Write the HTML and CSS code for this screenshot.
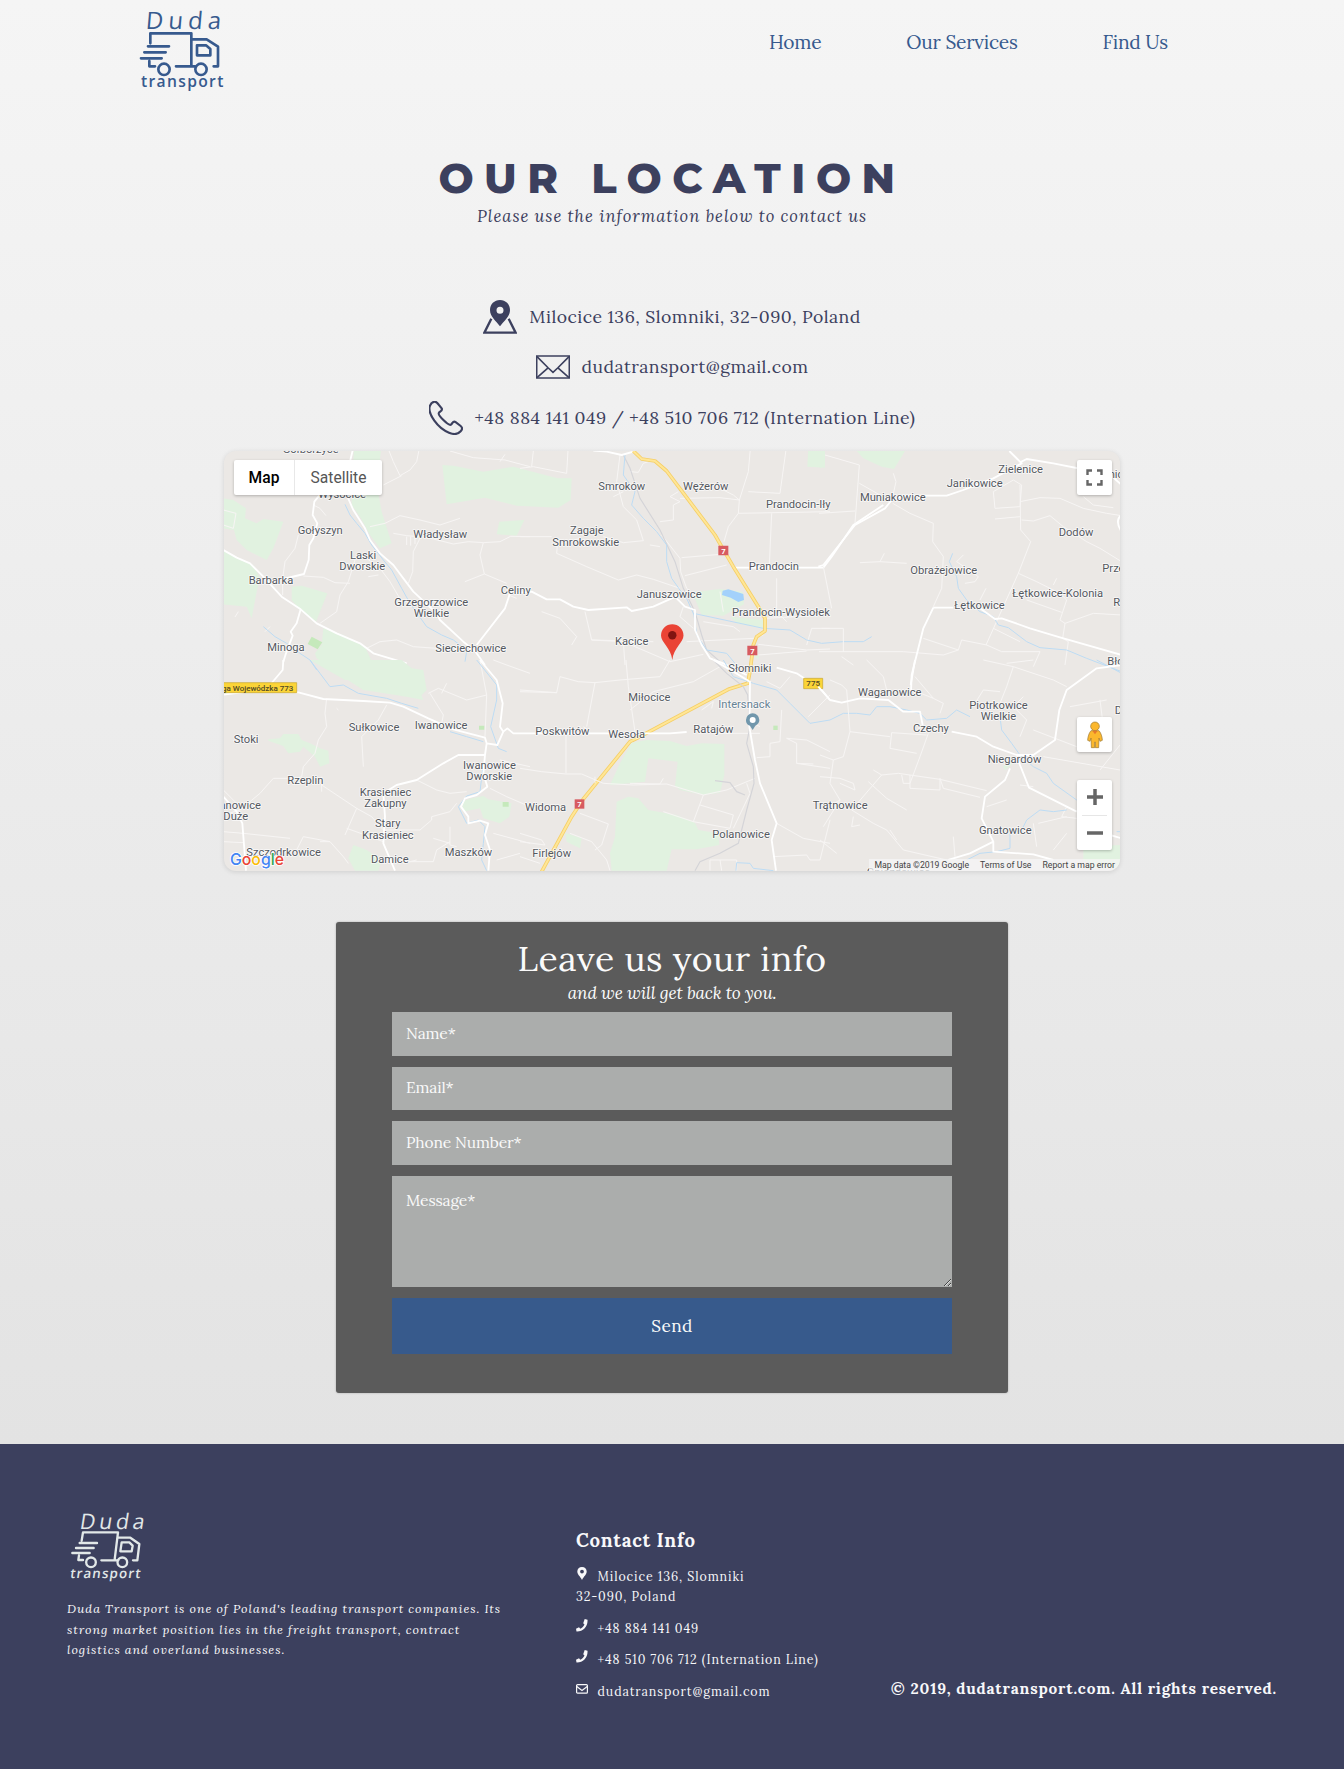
FILE: index.html
```html
<!DOCTYPE html>
<html lang="en">
<head>
<meta charset="utf-8">
<title>Duda Transport - Find Us</title>
<link rel="stylesheet" href="styles.css">
</head>
<body>
<div class="page">
<header class="header">
  <svg class="logo" viewBox="0 0 390 300" role="img" aria-label="Duda transport">
    <g class="logo-text">
      <text transform="translate(76 86) skewX(-5)" font-size="72" textLength="226">Duda</text>
      <text x="63" y="260" font-size="47" font-weight="600" textLength="247">transport</text>
    </g>
    <g class="logo-lines">
      <path d="M91 130V100H214V196M168 199H225M214 118H260L294 140V199H281M88 183V199H105M84 139H147M73 157H137M63 175H125"/>
      <path d="M231 136H258L271 147V166H231Z"/>
      <circle cx="132" cy="208" r="17"/><circle cx="243" cy="208" r="17"/>
    </g>
  </svg>
  <nav class="nav">
    <a>Home</a><a>Our Services</a><a>Find Us</a>
  </nav>
</header>

<main>
  <h1 class="title">OUR LOCATION</h1>
  <p class="subtitle">Please use the information below to contact us</p>

  <ul class="contacts">
    <li class="contact">
      <svg viewBox="0 0 102 102"><path d="M25 56L4 98H98L77 56" fill="none" stroke="currentColor" stroke-width="7"/><path fill-rule="evenodd" d="M51 0C34 0 21 13 21 30C21 50 40 64 51 79C62 64 81 50 81 30C81 13 68 0 51 0ZM51 20A10.500 10.500 0 1 1 51 41A10.500 10.500 0 1 1 51 20Z" fill="currentColor"/></svg>
      <span>Milocice 136, Slomniki, 32-090, Poland</span>
    </li>
    <li class="contact">
      <svg viewBox="0 0 102 102"><g fill="none" stroke="currentColor" stroke-width="5"><path d="M2 18H100V84H2Z"/><path d="M3 20L37 54L51 67L65 54L99 20M3 83L37 53M99 83L65 53"/></g></svg>
      <span>dudatransport@gmail.com</span>
    </li>
    <li class="contact">
      <svg viewBox="0 0 102 102"><path d="M16 2C22 1 25 5 29 11L38 22C42 28 34 31 30 35C26 39 37 51 44 58C51 65 61 74 66 71C70 67 73 59 79 63L95 75C101 80 100 86 95 91C86 101 74 101 60 95C45 89 28 76 16 59C6 45-2 26 3 14C6 7 11 3 16 2Z" fill="none" stroke="currentColor" stroke-width="6.500"/></svg>
      <span>+48 884 141 049 / +48 510 706 712 (Internation Line)</span>
    </li>
  </ul>

  <section class="map">
    <svg class="map-canvas" viewBox="0 0 896 420">
      <!-- north-west tile -->
      <g transform="translate(-4 -6) scale(.33333)">
        <g class="green">
          <path d="M10 160L40 165L78 190L75 220L110 235L130 222L190 230L160 310L140 345L80 315L50 285L42 255L10 250Z"/>
          <path d="M10 318L60 345L100 360L120 400L110 440L95 520L80 485L10 478Z"/>
          <path d="M215 425L245 422L322 445L288 530L240 495L215 465Z"/>
          <path d="M402 0H485L470 120L485 200L515 295L480 310L450 270L420 215L395 180Z"/>
          <path d="M667 60L700 62L790 80L880 65L1013 100L1055 100L1052 165L1015 188L890 182L795 158L680 178Z"/>
          <path d="M838 230L913 225L890 272L830 268Z"/>
          <path d="M310 550L370 570L435 605L460 660L500 700L540 690L600 740L610 765L560 755L430 735L375 700L290 640L285 625L305 600Z"/>
          <path class="park" d="M275 575L307 592L293 613L263 597Z"/>
        </g>
        <g class="minor">
          <path d="M235 270L225 310L195 350L188 400V450M250 393L310 397L345 413L390 415M405 345L385 410L360 450L350 500L300 535M450 245L495 235L540 212L600 225L660 240L720 220M520 265L560 272L600 275L640 282L700 297L745 290L790 293L840 290L872 274L930 275M790 293L780 330L793 387L860 415M600 280L580 320L578 380L565 415M500 0L520 50L540 92L570 75L590 50L600 0M545 92L490 120M690 18L760 38L855 45L930 65M793 387L735 410M440 610L480 590L530 585L580 605L650 610M280 180L300 190L318 212M440 340L480 370L510 410L545 470M855 28L840 50M10 195L48 205L40 250L10 240M865 450L890 460"/>
          <path d="M560 275V300M572 275V302M585 275V297M475 390L445 395M55 500L45 516M135 560L150 545"/>
        </g>
        <g class="river"><path d="M375 178L390 210L410 235L435 265L455 300L490 345L515 375L545 430L570 475L620 545L665 570L700 585L720 600L740 620L735 650"/><path d="M130 545L165 575L200 595L240 625L270 645L290 675"/></g>
        <g class="major">
          <path d="M10 315L50 338L90 355L130 395L185 455L242 493L290 535L350 565L420 595L460 625L560 655"/>
          <path d="M242 493L230 535L212 560L218 572L198 625L190 650"/>
          <path d="M315 130L283 170L278 210L292 235L280 280L268 300L266 345L252 387L190 402"/>
          <path d="M402 0L385 70L380 150L400 195L435 250L450 285L480 325L520 360L550 400L580 440L650 505L660 525L730 590L765 618L795 660"/>
          <path d="M770 600L855 490L870 445L935 440L980 463L1020 463L1060 485L1105 495L1220 487L1235 498L1300 485L1400 440"/>
        </g>
        <g class="label">
          <text x="188" y="24">Gołborzyce</text><text x="295" y="158">Wysocice</text><text x="233" y="266">Gołyszyn</text><text x="580" y="280">Władysław</text><text x="390" y="341">Laski</text><text x="358" y="374">Dworskie</text><text x="86" y="416">Barbarka</text><text x="842" y="446">Celiny</text><text x="523" y="483">Grzegorzowice</text><text x="581" y="517">Wielkie</text><text x="646" y="622">Sieciechowice</text><text x="142" y="619">Minoga</text>
        </g>
      </g>
      <!-- north-centre tile -->
      <g transform="translate(296 -6) scale(.33333)">
        <g class="green"><path d="M530 440L600 432L668 440L672 478L610 512L545 510L520 450Z"/><path d="M630 515L735 525V552L650 535Z"/><path d="M865 10H915V68L862 65Z"/><path d="M700 635L718 630L715 642Z"/></g>
        <path class="lake" d="M608 437L625 433L670 447L672 465L655 471L632 458L606 450Z"/>
        <g class="minor"><path d="M145 0L140 85L40 65L0 70M40 18L35 65M300 30L290 110L310 185L350 225L370 287L310 293L250 275M0 275H95M110 325L112 300L180 280M110 325L200 365L295 405L350 390L400 403L480 430M330 80L355 82L370 55L400 45M420 230L460 225V180L480 170L450 155L475 140M480 160L600 158L658 165L640 150L590 125M692 0L685 80L658 165L655 205L625 245L612 290M655 205L930 200M755 205L748 360M685 140L780 145L800 0M485 338L600 328M495 392L620 360M425 270L480 340L482 380L500 430L520 450M420 305L390 300M65 500L120 520L170 575L155 600M195 500L215 585L310 590L315 660M215 585L400 590M310 590L450 650L550 628M490 485L480 515L520 550M550 530L640 545L660 560M600 440L610 500M735 520L920 510M770 400V500L800 530M860 600L875 550H930M715 598L860 615L930 612M715 630L860 618M280 155L310 140M500 590L600 585L700 580L730 570"/></g>
        <path class="rail" d="M310 30L330 70L360 160L420 255L465 350L490 430L525 500L545 570L560 615L600 650"/>
        <g class="river"><path d="M315 30L310 90L345 140L335 180L370 220L410 260L440 300L440 350L455 400L480 435L500 460L522 510L530 570L560 615L620 625L645 655"/><path d="M520 505L730 550L810 555L860 585L905 595L970 590L1030 590L1055 575"/></g>
        <g class="major"><path d="M220 17L260 20L305 30L340 20M470 460L495 485L525 495L525 555L545 600L570 640L610 655L680 690M640 368H910L935 335L1000 240L1090 180M950 152"/></g>
        <path class="highway-edge" d="M340 18L365 42L405 48L440 78L585 270L605 305L640 365L715 485L735 520V558L710 575L700 600L690 680L683 715L625 733L350 880L330 890L190 1062L155 1115L65 1280"/>
        <path class="highway" d="M340 18L365 42L405 48L440 78L585 270L605 305L640 365L715 485L735 520V558L710 575L700 600L690 680L683 715L625 733L350 880L330 890L190 1062L155 1115L65 1280"/>
        <g class="label"><text x="235" y="134">Smroków</text><text x="489" y="135">Wężerów</text><text x="738" y="189">Prandocin-Iły</text><text x="150" y="268">Zagaje</text><text x="97" y="302">Smrokowskie</text><text x="686" y="374">Prandocin</text><text x="350" y="458">Januszowice</text><text x="636" y="514">Prandocin-Wysiołek</text><text x="285" y="600">Kacice</text></g>
        <g class="shield"><path d="M595 302H625V331H595ZM682 602H712V631H682Z"/><text x="610" y="326">7</text><text x="697" y="626">7</text></g>
      </g>
      <!-- north-east tile -->
      <g transform="translate(596 -6) scale(.33333)">
        <g class="green"><path d="M110 18H255L222 72L185 65L130 40Z"/><path d="M-3 18H15V60L0 70Z"/></g>
        <g class="minor"><path d="M15 30L118 60L105 235M118 115L180 150M220 85L228 110L218 155M218 175L270 205L340 235L338 290L370 335L365 430L340 485M-3 205L105 198M120 353L180 350L260 355M180 350L193 325M410 350L430 330M410 350L475 395L465 410L435 415M480 465L498 430M525 190L600 185L605 120L580 105L520 140L525 190M525 222L600 215M600 120L602 255L632 290L595 385L498 600M600 170L660 158L720 160L790 190L860 205L905 212M605 225L640 228L690 212L730 245L800 290L840 310L905 350M595 385L650 410L720 445L740 465L720 525L735 535L820 505L905 510M620 465L725 502M700 420L710 400M735 535L728 580L745 590L735 660M790 155L820 180L880 188M10 365L35 490M310 580L415 615L425 585L500 600L545 620L660 620L640 665M-3 620L250 620L370 630L415 615M5 550H70V620M65 635L100 660M520 550L600 590"/></g>
        <g class="river"><path d="M398 325L388 350L410 395L415 430L440 465L480 500L520 515L535 540L565 548L620 590L660 608L740 615L800 640L905 680"/></g>
        <g class="major"><path d="M-5 365L10 360L105 240L195 190L215 165L250 152H380L430 135L520 100L605 55L568 18M600 52L620 42L700 55L800 75L860 80L905 120M340 488H400M480 490L525 522L545 520L630 550L720 577L905 630M340 488L310 550L275 690L273 740M905 210C890 220 890 240 905 260"/></g>
        <g class="label"><text x="535" y="83">Zielenice</text><text x="380" y="125">Janikowice</text><text x="120" y="169">Muniakowice</text><text x="866" y="98">nice</text><text x="716" y="274">Dodów</text><text x="271" y="386">Obrażejowice</text><text x="847" y="381">Przemęczany</text><text x="577" y="456">Łętkowice-Kolonia</text><text x="403" y="493">Łętkowice</text><text x="880" y="483">Radziemice</text><text x="862" y="659">Błogocice</text></g>
      </g>
      <!-- south-west tile -->
      <g transform="translate(-4 209) scale(.33333)">
        <g class="green"><path d="M270 0H545L575 25L610 30L620 90L600 110L550 90L500 75L455 60H375Z"/><path d="M145 238L180 235L190 222L235 222L245 240L270 250L300 265L325 272L328 310L300 320L285 290L250 260L240 275L205 280L190 258L145 242Z"/><path d="M725 425L755 415L790 408L805 418L875 430L868 470L840 490L790 475L780 445L730 455Z"/><path d="M400 555L440 570L485 600L475 632H405L385 595Z"/><path class="park" d="M777 197H793V209H777ZM848 426H866V440H848Z"/></g>
        <g class="minor"><path d="M320 115L315 160L320 200L295 240L285 280L250 320L245 350L230 355H160L120 400L60 450L10 465M305 350V395M305 375L410 445L455 470L490 510M410 445L375 525M500 135L475 180L425 230L430 320M630 100L670 165L665 190M625 100L655 85L740 120L800 105M780 0L800 105L795 230M590 360L650 390L690 400L740 395M490 510H600L635 480L635 470L690 455L710 430M380 505L450 530L490 545M250 530L330 545L370 590L385 610M250 530L230 570M300 545H330M10 515L70 520L210 535M10 545L70 548M530 605L640 605L650 570L690 545M690 500V555L710 560M690 550L640 535M810 385L840 400L860 410L930 440M350 145L355 150M550 610L590 600M830 600L900 580M820 520L930 550M680 70L665 100M840 300L930 320M820 0L860 15L930 40M10 390L50 430"/></g>
        <g class="river"><path d="M270 0L300 40L330 80L370 75L415 100L500 115L545 130L595 145M690 215L740 230L790 245"/><path d="M770 0L830 75L830 120L812 200L835 265L860 275M790 310L780 395L740 408L715 440L740 490L775 480L795 500L790 550L785 600L800 632"/></g>
        <g class="major"><path d="M190 0L188 30L150 75L130 88M0 105L120 90L235 97L310 117L430 123L510 128L550 140L625 175L700 208L795 233L800 250L832 255L850 215L862 205L880 220H1350L1400 216M780 0L830 60L848 130L840 200L850 215M800 250L795 285H715L670 310L590 360L530 375L490 400L495 470L490 550L525 632M795 285L790 340L802 380L770 405L735 415L723 440L745 470L745 490L780 482L805 490L795 525L810 570L805 632M10 410L50 455L67 490L78 632"/></g>
        <path d="M0 68H230V98H0Z" fill="#fbd437" stroke="#c6a52a" stroke-width="2"/><text class="road-no" x="6" y="92" textLength="214">ga Wojewódzka 773</text>
        <g class="label"><text x="386" y="212">Sułkowice</text><text x="584" y="207">Iwanowice</text><text x="41" y="248">Stoki</text><text x="202" y="372">Rzeplin</text><text x="729" y="327">Iwanowice</text><text x="739" y="361">Dworskie</text><text x="419" y="408">Krasieniec</text><text x="433" y="441">Zakupny</text><text x="-20" y="446">Janowice</text><text x="10" y="479">Duże</text><text x="465" y="502">Stary</text><text x="426" y="536">Krasieniec</text><text x="79" y="587">Szczodrkowice</text><text x="453" y="609">Damice</text><text x="674" y="587">Maszków</text></g>
      </g>
      <!-- south-centre tile -->
      <g transform="translate(296 209) scale(.33333)">
        <g class="green"><path d="M335 248L380 240L450 243L500 258L545 250L613 252V345L600 398L550 405L480 390L465 378L473 305L385 295L375 365L270 375L300 310Z"/><path d="M290 425L325 410L355 415L385 450L470 465L525 488L535 510L595 520L598 555L530 568H455L440 632H275L270 580L285 530Z"/><path d="M135 518L185 535L180 565L140 545Z"/><path class="park" d="M760 197H773V210H760Z"/></g>
        <g class="minor"><path d="M0 95L110 98L120 50L175 65L225 68L300 60L420 50L450 0M225 68L200 200M110 98L0 90M318 0L325 80L345 215M330 150L400 95L520 65L600 20M138 220V340M0 325L65 335L138 342H185L250 370L340 375L440 372L550 405L620 390L705 355M550 405L520 485L430 455M540 435L640 465L630 505L520 485M680 370L690 400L640 505M180 460L265 492L245 555L225 570M150 520L215 545L260 600L270 632M680 180L720 200M785 150L780 245L750 250V290L710 293M800 235L830 250V310L930 325M830 310L880 312M800 235L860 240L930 275M0 520L65 540L75 555L0 545M770 490L850 535L930 550M930 480L900 600L870 600L860 585L760 590M570 632V600H650V632M600 600L605 632M330 370L420 372L430 355M225 350V370M575 145L580 125L545 150M0 590L60 610M580 220H720M740 65L780 85L810 50M865 170L930 105M205 210L190 200"/></g>
        <path class="rail" d="M580 0L620 40L670 80L683 105L690 200L680 250L700 320L702 370L680 450L655 550L600 580L540 605L525 632M585 362L630 368L650 395L675 405"/>
        <g class="river"><path d="M610 0L640 50L700 70L770 90L810 130L840 160L870 190L930 180L970 160L1010 160L1050 165L1070 140L1110 140L1160 150L1200 160L1220 180L1280 175L1310 150L1350 170"/><path d="M648 632L650 608L690 610L700 625L760 632"/></g>
        <g class="major"><path d="M580 0L640 35L690 65L688 200L705 300L720 370L770 490L755 540L768 632M770 23L830 40L905 90L930 120"/></g>
        <g class="label"><text x="625" y="35">Słomniki</text><text x="325" y="122">Miłocice</text><text x="46" y="226">Poskwitów</text><text x="265" y="234">Wesoła</text><text x="520" y="219">Ratajów</text><text x="15" y="453">Widoma</text><text x="577" y="534">Polanowice</text><text x="37" y="591">Firlejów</text><text class="place" x="595" y="143">Intersnack</text></g>
        <path d="M698 210L690 197C680 194 678 187 678 180A20 20 0 1 1 718 180C718 187 714 193 706 197Z" fill="#7197ac"/><circle cx="698" cy="180" r="9" fill="#fff"/>
        <g class="shield"><path d="M164 418H193V446H164Z"/><text x="178" y="442">7</text></g>
        <path d="M851 55H908V86H851Z" fill="#fbd437" stroke="#c6a52a" stroke-width="2"/><text class="road-no" x="859" y="79" textLength="41">775</text>
      </g>
      <!-- south-east tile -->
      <g transform="translate(596 209) scale(.33333)">
        <g class="green"><path d="M790 560L905 555V625H820L790 600Z"/><path d="M548 318L580 310L555 330Z"/></g>
        <g class="minor"><path d="M140 0L190 50L200 90M285 50L340 115L370 130L360 160M90 215L210 230M290 95L340 115M325 220L300 290L270 370M215 218L320 225M215 218L210 265L290 280M0 285L40 300L70 290L90 215L80 90L65 75L30 60M40 300L30 370L60 420L25 440M95 450L185 345L235 340L360 358L500 392M185 345L160 330M0 350L60 355L100 370L105 390L60 370M145 365L200 415L260 450M245 345L250 370H270M270 345V385L360 390V355L370 385L480 412M95 450L160 490L200 510L250 570L380 600M100 470L95 500L120 495M400 530L405 590M0 540L50 580M210 510L230 540M10 500L60 420M490 0L580 20L560 80L540 130M465 130L490 90L540 95M580 20L700 60L740 80M610 110L580 140L620 180L600 230M750 140L860 120M640 210L770 260M670 290L900 330M900 255L840 330M600 375L640 380M500 440L560 420M740 440L725 470L770 475M655 490L740 470M700 570L740 520M560 10L640 0M840 120L850 200M640 490L650 560"/></g>
        <g class="river"><path d="M830 0L905 40M540 170L545 210L575 250L600 285L640 320L680 340L700 370L770 420M740 450L700 455L660 450L620 480L605 510L570 520V565L530 575L480 580L440 600M890 515H905"/></g>
        <g class="major"><path d="M-5 80L30 120L65 128L120 115L205 120L250 155L300 155L308 195M285 0L272 75M395 215L470 230L520 260L590 285L640 285L705 240L718 150L740 90L830 25L905 15M590 290L627 383L770 455M570 325L555 360L495 410L485 475L520 545V575L640 583L700 600M520 545L450 580L385 600M870 525L905 535"/></g>
        <g class="label"><text x="114" y="108">Waganowice</text><text x="448" y="147">Piotrkowice</text><text x="482" y="181">Wielkie</text><text x="279" y="217">Czechy</text><text x="884" y="161">Dębina</text><text x="503" y="309">Niegardów</text><text x="-22" y="448">Trątnowice</text><text x="477" y="522">Gnatowice</text><text x="140" y="648">Gniazdowice</text></g>
      </g>
      <path d="M448.300 209C447 197 437 191 437 184.500A11.200 11.200 0 1 1 459.500 184.500C459.500 191 449.600 197 448.300 209Z" fill="#ea4335"/><circle cx="448.300" cy="184.300" r="4.200" fill="#811411"/>
      <text class="google" x="6" y="414" textLength="54" lengthAdjust="spacingAndGlyphs"><tspan fill="#4285f4">G</tspan><tspan fill="#ea4335">o</tspan><tspan fill="#fbbc05">o</tspan><tspan fill="#4285f4">g</tspan><tspan fill="#34a853">l</tspan><tspan fill="#ea4335">e</tspan></text>
    </svg>
    <div class="map-types"><button class="type-map">Map</button><button class="type-satellite">Satellite</button></div>
    <button class="map-button fullscreen" aria-label="Full screen"><svg width="17" height="17" viewBox="0 0 17 17"><path d="M1.500 6V1.500H6M11 1.500H15.500V6M15.500 11V15.500H11M6 15.500H1.500V11" fill="none" stroke="#666" stroke-width="2.400"/></svg></button>
    <button class="map-button pegman" aria-label="Street view"><svg width="16" height="28" viewBox="0 0 48 82"><g fill="#fbb72d" stroke="#9b762e" stroke-width="2"><path d="M12 28H36C42 34 46 48 46 57L39 60L36 50L35 79H25V62H23V79H13L12 50L9 60L2 57C2 48 6 34 12 28Z"/><circle cx="24" cy="15" r="13"/></g><path d="M16 28H32L24 39Z" fill="#e5782c"/></svg></button>
    <div class="zoom"><button aria-label="Zoom in"><svg width="16" height="16"><path d="M8 0V16M0 8H16" stroke="#666" stroke-width="3.500"/></svg></button><button aria-label="Zoom out"><svg width="16" height="16"><path d="M0 8H16" stroke="#666" stroke-width="3.500"/></svg></button></div>
    <div class="attribution"><span>Map data ©2019 Google</span><span>Terms of Use</span><span>Report a map error</span></div>
  </section>

  <form class="form">
    <h2>Leave us your info</h2>
    <p>and we will get back to you.</p>
    <div class="fields">
      <input class="field" placeholder="Name*">
      <input class="field" placeholder="Email*">
      <input class="field" placeholder="Phone Number*">
      <textarea class="field message" placeholder="Message*"></textarea>
      <button class="send" type="button">Send</button>
    </div>
  </form>
</main>

<footer class="footer">
  <div class="about">
    <svg class="footer-logo" viewBox="50 50 240 230" role="img" aria-label="Duda transport">
      <g class="logo-text">
        <text transform="translate(86 115) skewX(-9)" font-size="64" textLength="194">Duda</text>
        <text transform="translate(58 263) skewX(-8)" font-size="40" font-weight="600" textLength="211">transport</text>
      </g>
      <g class="logo-lines">
        <path d="M94 151L98 126H203L193 208M153 210H204M202 142H240L267 161L261 210H248M86 195L84 209H98M88 158H140M77 173H130M66 188H118"/>
        <path d="M214 156H237L247 166L244 183H210Z"/>
        <circle cx="122" cy="216" r="14.500"/><circle cx="216" cy="216" r="14.500"/>
      </g>
    </svg>
    <p>Duda Transport is one of Poland's leading transport companies. Its<br>strong market position lies in the freight transport, contract<br>logistics and overland businesses.</p>
  </div>
  <div class="info">
    <h3>Contact Info</h3>
    <p><svg viewBox="0 0 12 13"><path fill-rule="evenodd" d="M6 0C3.200 0 1.300 2 1.300 4.500C1.300 7.500 4 9 6 13C8 9 10.700 7.500 10.700 4.500C10.700 2 8.800 0 6 0ZM6 2.700A1.900 1.900 0 1 1 6 6.500A1.900 1.900 0 1 1 6 2.700Z" fill="currentColor"/></svg>Milocice 136, Slomniki<br>32-090, Poland</p>
    <p><svg viewBox="0 0 12 13"><path d="M8.700 0L11.500 .7C12.100 7.500 7 12.800 .5 12.500L0 9.700L3 8.300L4.300 9.800C6.200 9 7.700 7.500 8.500 5.600L7.200 4.200Z" fill="currentColor"/></svg>+48 884 141 049</p>
    <p><svg viewBox="0 0 12 13"><path d="M8.700 0L11.500 .7C12.100 7.500 7 12.800 .5 12.500L0 9.700L3 8.300L4.300 9.800C6.200 9 7.700 7.500 8.500 5.600L7.200 4.200Z" fill="currentColor"/></svg>+48 510 706 712 (Internation Line)</p>
    <p><svg viewBox="0 0 12 13"><g fill="none" stroke="currentColor" stroke-width="1.200"><rect x=".6" y="2.600" width="10.800" height="8.600" rx="1"/><path d="M.8 4.500L6 8.500L11.200 4.500"/></g></svg>dudatransport@gmail.com</p>
  </div>
  <p class="copyright">© 2019, dudatransport.com. All rights reserved.</p>
</footer>
</div>
</body>
</html>
```
FILE: styles.css
```css
* { box-sizing: border-box; margin: 0; padding: 0; }
body { font-family: Lora, "Liberation Serif", serif; color: #3c405e; background: #3c405e; }
button, input, textarea { font: inherit; border: 0; }
.page { background: linear-gradient(#f5f5f5, #e3e3e3 1444px); }

.header { height: 100px; padding: 0 176px 0 120px; display: flex; justify-content: space-between; align-items: flex-start; color: #375a8e; }
.logo { width: 130px; height: 100px; }
.logo-text { font-family: "Open Sans", sans-serif; fill: currentColor; }
.logo-lines { fill: none; stroke: currentColor; stroke-width: 8; stroke-linecap: round; stroke-linejoin: round; }
.nav { display: flex; gap: 85px; font-size: 19.200px; line-height: 85px; letter-spacing: -.25px; }

.title { margin-top: 53px; text-align: center; font: 800 41.600px/50px Montserrat, Inter, sans-serif; letter-spacing: 10.500px; }
.subtitle { text-align: center; font-size: 16.600px; line-height: 27px; font-style: italic; letter-spacing: .94px; }
.contacts { list-style: none; margin-top: 60.500px; height: 160.500px; }
.contact { height: 50.600px; display: flex; justify-content: center; align-items: center; gap: 12px; font-size: 17.600px; letter-spacing: .47px; }
.contact svg { width: 34px; height: 34px; margin-top: 2px; }
.contact span { padding-top: 1px; }

.map { position: relative; width: 896px; height: 420px; margin: 0 auto; border-radius: 12px; overflow: hidden; background: #ebe8e5; box-shadow: 0 1px 5px rgba(0,0,0,.12); font-family: Roboto, sans-serif; }
.map-canvas { display: block; width: 896px; height: 420px; }
.green { fill: #e1f2e0; }
.park { fill: #c5e9bb; }
.lake { fill: #a3d1fb; }
.minor { fill: none; stroke: #f7f5f4; stroke-width: 3; stroke-linejoin: round; }
.major { fill: none; stroke: #fff; stroke-width: 5.500; stroke-linejoin: round; }
.river { fill: none; stroke: #bddcf4; stroke-width: 3; stroke-linejoin: round; }
.rail { fill: none; stroke: #d4d4d8; stroke-width: 3.500; }
.highway-edge { fill: none; stroke: #f5cf68; stroke-width: 11; stroke-linejoin: round; }
.highway { fill: none; stroke: #ffe696; stroke-width: 6; stroke-linejoin: round; }
.label { font-size: 33.500px; fill: #54585f; stroke: #fff; stroke-width: 5; stroke-opacity: .75; paint-order: stroke; stroke-linejoin: round; }
.label .place { fill: #668294; }
.shield { fill: #d75b60; }
.shield text { fill: #fff; font-size: 23px; font-weight: 700; text-anchor: middle; }
.road-no { fill: #514a26; font-size: 24px; font-weight: 500; }
.google { font: 500 16.500px Inter, sans-serif; stroke: #fff; stroke-width: 1.500; paint-order: stroke; }
.map-types { position: absolute; left: 10px; top: 9px; height: 35px; display: flex; background: #fff; border-radius: 2px; box-shadow: 0 1px 3px rgba(0,0,0,.25); }
.map-types button { background: none; font-size: 15.600px; text-align: center; }
.map-types .type-map { width: 61px; font-weight: 500; color: #000; border-right: 1px solid #e8e8e8; }
.type-satellite { width: 87px; color: #565656; }
.map-button, .zoom { position: absolute; right: 8px; width: 35px; background: #fff; border-radius: 2px; box-shadow: 0 1px 3px rgba(0,0,0,.25); }
.map-button { height: 35px; display: flex; align-items: center; justify-content: center; }
.fullscreen { top: 9px; }
.pegman { top: 266px; }
.zoom { top: 329px; height: 70px; display: flex; flex-direction: column; padding: 0 5px; }
.zoom button { flex: 1; background: none; display: flex; align-items: center; justify-content: center; }
.zoom button + button { border-top: 1px solid #e6e6e6; }
.attribution { position: absolute; right: 0; bottom: 0; height: 12px; padding: 0 5px; display: flex; gap: 11px; background: rgba(245,245,245,.75); font-size: 8.700px; line-height: 12px; color: #444; }

.form { width: 672px; height: 471px; margin: 51px auto; padding: 14px 56px 0; background: #5b5b5b; border-radius: 3px; color: #fafafa; text-align: center; box-shadow: 0 0 2px rgba(0,0,0,.3); }
.form h2 { font-size: 35.600px; line-height: 44px; font-weight: 400; letter-spacing: .450px; }
.form p { padding-top: 1px; font-size: 17.200px; line-height: 25px; font-style: italic; letter-spacing: -.18px; }
.fields { margin-top: 6px; display: flex; flex-direction: column; gap: 11px; }
.field { display: block; width: 100%; height: 43.600px; padding: 0 14px 2px; background: #abadac; font-size: 15.600px; line-height: 22px; letter-spacing: -.14px; color: #fafafa; border-radius: 0; }
.field::placeholder { color: #fafafa; opacity: 1; }
.message { height: 111.400px; padding-top: 13.500px; resize: vertical; }
.send { height: 56px; background: #375a8c; color: #fafafa; font-size: 17.200px; letter-spacing: .4px; }

.footer { height: 325px; padding: 0 67px; display: flex; background: #3c405e; color: #f8f8fa; }
.about { width: 509px; padding-top: 62.700px; font-size: 12.400px; font-style: italic; letter-spacing: .920px; line-height: 20.300px; }
.footer-logo { display: block; width: 80px; height: 76.700px; margin-bottom: 16px; font-style: normal; letter-spacing: 0; color: #e2e8e8; }
.footer-logo .logo-lines { stroke-width: 7; }
.info { padding-top: 81px; font-size: 12.400px; line-height: 20.300px; letter-spacing: .910px; }
.info h3 { font-size: 18.600px; line-height: 30px; letter-spacing: .740px; margin-bottom: 12px; }
.info p { margin-bottom: 11.200px; }
.info svg { width: 12px; height: 13px; margin-right: 9.500px; vertical-align: 1px; }
.copyright { margin: auto 0 70px auto; font-size: 15.400px; line-height: 20px; font-weight: 700; letter-spacing: .820px; }
```
